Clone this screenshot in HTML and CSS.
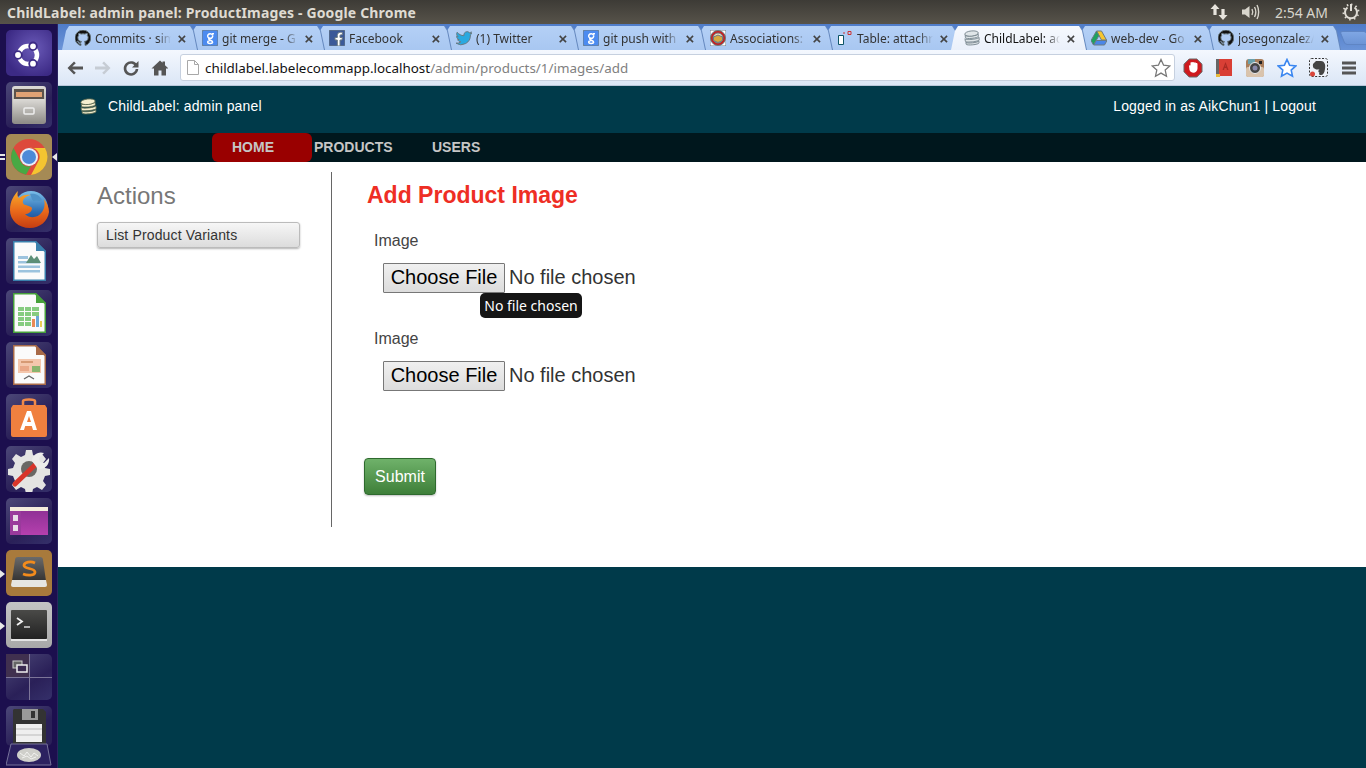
FILE: index.html
```html
<!DOCTYPE html>
<html lang="en">
<head>
<meta charset="utf-8">
<title>ChildLabel: admin panel: ProductImages</title>
<link rel="stylesheet" href="styles.css">
</head>
<body>
<svg class="defs" width="0" height="0" aria-hidden="true">
  <defs>
    <linearGradient id="foxfill" x1="0" y1="0" x2="0" y2="1"><stop offset="0" stop-color="#f8ac2a"/><stop offset=".55" stop-color="#e9681a"/><stop offset="1" stop-color="#c53d12"/></linearGradient>
    <linearGradient id="globefill" x1="0" y1="0" x2="0" y2="1"><stop offset="0" stop-color="#7cc0ea"/><stop offset=".6" stop-color="#2c6db4"/><stop offset="1" stop-color="#1c3f86"/></linearGradient>
    <linearGradient id="cabinet" x1="0" y1="0" x2="0" y2="1"><stop offset="0" stop-color="#dcdad6"/><stop offset="1" stop-color="#8f8d88"/></linearGradient>
    <linearGradient id="purplewin" x1="0" y1="0" x2="0" y2="1"><stop offset="0" stop-color="#8a2f92"/><stop offset="1" stop-color="#b540ae"/></linearGradient>
    <linearGradient id="sublimebox" x1="0" y1="0" x2="0" y2="1"><stop offset="0" stop-color="#6a6a6a"/><stop offset="1" stop-color="#333"/></linearGradient>
    <linearGradient id="termscreen" x1="0" y1="0" x2="0" y2="1"><stop offset="0" stop-color="#4a4a48"/><stop offset="1" stop-color="#222"/></linearGradient>
  </defs>
  <symbol id="gh" viewBox="0 0 16 16"><path fill="#111" d="M8 0a8 8 0 0 0-2.5 15.6c.4.1.5-.2.5-.4v-1.4c-2.2.5-2.7-1-2.7-1-.4-.9-.9-1.200-.9-1.200-.7-.5.1-.5.1-.5.8.1 1.200.8 1.200.8.7 1.200 1.900.9 2.300.7.1-.5.3-.9.5-1.100-1.800-.2-3.600-.9-3.600-4 0-.9.3-1.600.8-2.100-.1-.2-.4-1 .1-2.100 0 0 .7-.2 2.200.8a7.600 7.600 0 0 1 4 0c1.500-1 2.200-.8 2.200-.8.4 1.100.2 1.900.1 2.100.5.600.8 1.300.8 2.100 0 3.100-1.900 3.700-3.700 3.900.3.300.6.700.6 1.500v2.200c0 .2.100.5.600.4A8 8 0 0 0 8 0z"/></symbol>
  <symbol id="gg" viewBox="0 0 16 16"><rect width="16" height="16" rx="2" fill="#4c8bf0"/><path fill="none" stroke="#fff" stroke-width="1.500" d="M10.500 5.200a2.500 2.300 0 1 1-.1-.2M7.700 7.700c-1.200.8-1.300 1.500-.1 2.100 1.700.8 3.100 1.100 3 2.300-.1 1.700-4.800 1.700-4.900.1 0-1.100 1.400-1.500 2.600-1.600M10 3.700h2"/></symbol>
  <symbol id="db" viewBox="0 0 16 16"><g stroke-width=".8" transform="rotate(-6 8 8)"><path d="M1.500 11.500c0 1.800 13 1.800 13 0v2c0 1.800-13 1.800-13 0z"/><path d="M1 8c0 1.800 14 1.800 14 0v2.500c0 1.800-14 1.800-14 0z"/><path d="M1.500 4.500c0 1.800 13 1.800 13 0V7c0 1.800-13 1.800-13 0z"/><ellipse cx="8" cy="3.500" rx="6.800" ry="2.600"/></g></symbol>
  <symbol id="star" viewBox="0 0 20 20"><path d="M10 1.500l2.600 5.700 6.200.7-4.600 4.200 1.300 6.100L10 15.100l-5.500 3.100 1.300-6.100L1.200 7.900l6.200-.7z"/></symbol>
</svg>

<header class="titlebar">
  <span class="window-title">ChildLabel: admin panel: ProductImages - Google Chrome</span>
  <div class="indicators">
    <svg class="ind-net" width="18" height="18" viewBox="0 0 18 18"><path fill="#e6e3dc" d="M5 1l4.500 5H6.600v6H3.400V6H.5zM13 17l-4.500-5h2.900V6h3.200v6h2.900z"/></svg>
    <svg class="ind-vol" width="20" height="18" viewBox="0 0 20 18"><path fill="#d8d5cc" d="M1 6.500h3L8.500 3v12L4 11.500H1z"/><path fill="none" stroke="#d8d5cc" stroke-width="1.400" d="M11 6c1 2 1 4 0 6M13.500 4c1.600 3 1.600 7 0 10M16 2c2.200 4 2.200 10 0 14"/></svg>
    <span class="clock">2:54 AM</span>
    <svg class="ind-power" width="18" height="18" viewBox="0 0 18 18"><path fill="none" stroke="#e0ddd5" stroke-width="2" d="M9 1v7M5.500 4.500a6 6 0 1 0 7 0"/><path fill="none" stroke="#e0ddd5" stroke-width="2" stroke-dasharray="1.500 3.200" d="M9 1.500a7.500 7.500 0 1 1-.1 0"/></svg>
  </div>
</header>

<div class="desktop">
  <nav class="launcher">
    <div class="tile tile-purple"><svg viewBox="0 0 46 46"><circle cx="22" cy="25" r="9" fill="none" stroke="#fff" stroke-width="4.500"/><g fill="#fff" stroke="#3c2a85" stroke-width="1.800"><circle cx="12" cy="25" r="3.800"/><circle cx="27" cy="16.300" r="3.800"/><circle cx="27" cy="33.700" r="3.800"/></g></svg></div>
    <div class="tile tile-dark"><svg viewBox="0 0 46 46"><rect x="6" y="4" width="34" height="38" rx="3" fill="url(#cabinet)"/><rect x="8" y="7" width="30" height="10" fill="#5c534c"/><rect x="10" y="10" width="26" height="5" fill="#e0a274"/><rect x="7" y="17" width="32" height="24" fill="url(#cabinet)"/><rect x="18" y="26" width="10" height="6" rx="1" fill="none" stroke="#eee" stroke-width="1.500"/></svg></div>
    <div class="tile tile-gold">
      <span class="pip pip-left pip-double"></span><span class="pip-right"></span>
      <svg viewBox="0 0 46 46"><circle cx="23" cy="23" r="18" fill="#dd4a3c"/><path fill="#f4c531" d="M23 14h16a18 18 0 0 1-14 27l8-15a9 9 0 0 0-10-12z"/><path fill="#48a944" d="M7.500 14L15 28a9 9 0 0 0 10 4l-5 8.800A18 18 0 0 1 7.500 14z"/><circle cx="23" cy="23" r="9" fill="#e8eef8"/><circle cx="23" cy="23" r="7" fill="#4d8ad8"/></svg>
    </div>
    <div class="tile tile-dark"><svg viewBox="0 0 46 46"><circle cx="25" cy="22" r="17" fill="url(#globefill)"/><path fill="#4f93c9" d="M24 8c6-1 10 2 12 6-3 2-5 0-7 1-3 1-3-3-5-7z"/><path fill="url(#foxfill)" d="M4 24C4 15 8 9 12 5c-1 3-.5 6 1 7 3-3 8-4 12-3-6 1-9 5-8 8 1 3 7 2 9 5 0 4-4 6-7 6 5 5 13 4 17-2 3-4 3-9 2-13 3 4 5 8 5 13-1 9-9 16-19 16C12 42 4 34 4 24z"/></svg></div>
    <div class="tile tile-dark"><svg viewBox="0 0 46 46"><path fill="#3a80ad" d="M7 3h23l10 10v30H7z"/><path fill="#fbfbfb" d="M8.500 4.500h20.500l9.500 9.500v27.500h-30z"/><path fill="#3a80ad" d="M30 3l10 10H30z"/><rect x="12" y="18" width="10" height="3" fill="#9cc3de"/><rect x="12" y="23" width="22" height="2.500" fill="#9cc3de"/><rect x="12" y="27.500" width="22" height="2.500" fill="#9cc3de"/><rect x="12" y="32" width="22" height="2.500" fill="#9cc3de"/><path fill="#5c8f78" d="M20 25l5-8 3 4 3-3 4 7z"/></svg></div>
    <div class="tile tile-dark"><svg viewBox="0 0 46 46"><path fill="#46a03a" d="M7 3h23l10 10v30H7z"/><path fill="#fbfbfb" d="M8.500 4.500h20.500l9.500 9.500v27.500h-30z"/><path fill="#46a03a" d="M30 3l10 10H30z"/><g fill="#86cc80"><rect x="12" y="17" width="6" height="4"/><rect x="19" y="17" width="6" height="4"/><rect x="26" y="17" width="7" height="4"/><rect x="12" y="22" width="6" height="4"/><rect x="19" y="22" width="6" height="4"/><rect x="26" y="22" width="7" height="4"/><rect x="12" y="27" width="6" height="4"/><rect x="19" y="27" width="6" height="4"/><rect x="12" y="32" width="6" height="4"/><rect x="19" y="32" width="6" height="4"/></g><rect x="26" y="29" width="3" height="8" fill="#e98a55"/><rect x="30" y="26" width="3" height="11" fill="#6ba7d8"/><rect x="34" y="31" width="2" height="6" fill="#e8cf55"/></svg></div>
    <div class="tile tile-dark"><svg viewBox="0 0 46 46"><path fill="#a86a48" d="M7 3h23l10 10v30H7z"/><path fill="#fbfbfb" d="M8.500 4.500h20.500l9.500 9.500v27.500h-30z"/><path fill="#a86a48" d="M30 3l10 10H30z"/><rect x="12" y="17" width="23" height="14" fill="#f4c7ad"/><rect x="15" y="19" width="12" height="2" fill="#d69a74"/><rect x="26" y="24" width="8" height="6" fill="#8ab46e"/><rect x="14" y="24" width="9" height="5" fill="#e9a888"/><path fill="none" stroke="#666" stroke-width="1.300" d="M18 37l5-3 5 3"/></svg></div>
    <div class="tile tile-dark"><svg viewBox="0 0 46 46"><path fill="none" stroke="#f08a4a" stroke-width="2.500" d="M17 12V7c0-2 12-2 12 0v5"/><path fill="#f0803f" d="M7 11h32l2 3v27a2 2 0 0 1-2 2H7a2 2 0 0 1-2-2V14z"/><path fill="#fff" d="M21 17h4l6 19h-4l-1.200-4h-6.600L18 36h-4zm2 5l-2 6h4z"/></svg></div>
    <div class="tile tile-dark"><svg viewBox="0 0 46 46"><path fill="#e4e4e2" d="M20 4h6l1 5 4 2 5-3 4 5-3 4 2 5 5 1v6l-5 1-2 5 3 4-4 5-5-3-4 2-1 5h-6l-1-5-4-2-5 3-4-5 3-4-2-5-5-1v-6l5-1 2-5-3-4 4-5 5 3 4-2z"/><circle cx="23" cy="23" r="8" fill="#6a6864"/><path stroke="#d8352a" stroke-width="5" stroke-linecap="round" d="M9 38l21-20"/><path fill="#ececea" d="M26 15c0-6 6-10 12-8l-5 5 1 4 4 1 5-5c1 6-4 12-11 11z"/></svg></div>
    <div class="tile tile-dark"><svg viewBox="0 0 46 46"><rect x="4" y="9" width="38" height="28" fill="url(#purplewin)"/><rect x="4" y="9" width="38" height="4" fill="#f3ecdc"/><rect x="4" y="13" width="11" height="24" fill="#9a3a9c"/><rect x="7" y="17" width="5" height="6" fill="#e8dce8"/><rect x="7" y="27" width="5" height="6" fill="#e8dce8"/></svg></div>
    <div class="tile tile-amber">
      <span class="pip pip-left"></span>
      <svg viewBox="0 0 46 46"><path fill="url(#sublimebox)" d="M9 10a3 3 0 0 1 3-3h22a3 3 0 0 1 3 3l3 21H6z"/><path fill="#e6e6e2" d="M6 30h34l1 5a2 2 0 0 1-2 2H7a2 2 0 0 1-2-2z"/><path fill="none" stroke="#f28b1c" stroke-width="2.800" d="M29 13c-4-2-11-1-11 2.500s11 2.500 11 6.500-8 3.500-12 2"/></svg>
    </div>
    <div class="tile tile-light">
      <span class="pip pip-left"></span>
      <svg viewBox="0 0 46 46"><rect x="5" y="8" width="36" height="29" rx="1" fill="url(#termscreen)"/><rect x="5" y="37" width="36" height="2" fill="#e4e4e4"/><path fill="none" stroke="#f0f0f0" stroke-width="1.800" d="M11 16l5 3.500-5 3.500"/><path stroke="#ddd" stroke-width="1.500" d="M18 25h6"/></svg>
    </div>
    <div class="tile tile-dark"><svg viewBox="0 0 46 46"><rect width="23" height="23" fill="#40304f"/><path stroke="#7c7598" d="M23.500 0v46M0 23.500h46"/><rect x="7" y="7" width="9" height="7" fill="#666" stroke="#ccc"/><rect x="11" y="11" width="10" height="7" fill="#3a2a50" stroke="#eee" stroke-width="1.500"/></svg></div>
    <div class="tile tile-trash"><svg viewBox="0 0 46 62"><path fill="#333" d="M8 3h29l3 3v32H7V4z"/><rect x="16" y="3" width="16" height="11" fill="#9a9a9a"/><rect x="25" y="5" width="4" height="7" fill="#333"/><rect x="10" y="18" width="26" height="18" fill="#efefef"/><path stroke="#bbb" d="M10 23h26M10 29h26"/><path fill="#2c2160" stroke="#77739a" d="M5 38h36l4 21H0z"/><ellipse cx="23" cy="49" rx="12" ry="7" fill="#cfcfca"/><path fill="none" stroke="#f2f2f0" d="M14 47l4 3 3-4 4 5 3-4 4 3M16 52l5-2 4 3 5-2"/></svg></div>
  </nav>

  <main class="browser">
    <div class="tabstrip">
      <div class="tab"><div class="tab-shape"><svg class="favicon"><use href="#gh"/></svg><span class="tab-title">Commits · sim</span><span class="tab-close">×</span></div></div>
      <div class="tab"><div class="tab-shape"><svg class="favicon"><use href="#gg"/></svg><span class="tab-title">git merge - G</span><span class="tab-close">×</span></div></div>
      <div class="tab"><div class="tab-shape"><svg class="favicon" viewBox="0 0 16 16"><rect width="16" height="16" rx="1" fill="#3b5998"/><path fill="#fff" d="M11 16v-6h2l.4-2.500H11V6c0-.8.3-1.200 1.200-1.200h1.200V2.500C13 2.400 12.300 2.300 11.500 2.300c-2 0-3.200 1.200-3.200 3.300v1.900H6V10h2.300v6z"/></svg><span class="tab-title">Facebook</span><span class="tab-close">×</span></div></div>
      <div class="tab"><div class="tab-shape"><svg class="favicon" viewBox="0 0 16 16"><path fill="#2aa9e0" d="M16 3.200c-.6.300-1.200.4-1.900.5.700-.4 1.200-1 1.400-1.800-.6.400-1.300.6-2 .8A3.300 3.300 0 0 0 7.900 5.700C5.200 5.600 2.800 4.300 1.100 2.300c-.9 1.500-.4 3.400 1 4.400-.5 0-1-.2-1.500-.4 0 1.600 1.100 3 2.600 3.300-.5.100-1 .1-1.500 0 .4 1.300 1.600 2.200 3.100 2.300A6.600 6.600 0 0 1 0 13.200 9.300 9.300 0 0 0 14.400 5c.6-.5 1.200-1.100 1.600-1.800z"/></svg><span class="tab-title">(1) Twitter</span><span class="tab-close">×</span></div></div>
      <div class="tab"><div class="tab-shape"><svg class="favicon"><use href="#gg"/></svg><span class="tab-title">git push with</span><span class="tab-close">×</span></div></div>
      <div class="tab"><div class="tab-shape"><svg class="favicon" viewBox="0 0 16 16"><rect width="16" height="16" fill="#fff"/><circle cx="8" cy="8" r="7.500" fill="#c81f1f"/><circle cx="8" cy="8" r="5" fill="#f3e3c0"/><path fill="#d8a83c" d="M3.500 7l4.500-2 4.500 2v3.500L8 12.500l-4.500-2z"/></svg><span class="tab-title">Associations:</span><span class="tab-close">×</span></div></div>
      <div class="tab"><div class="tab-shape"><svg class="favicon" viewBox="0 0 16 16"><path fill="#fff" stroke="#0c5566" d="M1.500 5.500h5v9h-5z"/><path fill="none" stroke="#c33" d="M6 3h2M11 1.500h3v3h-3z"/></svg><span class="tab-title">Table: attachr</span><span class="tab-close">×</span></div></div>
      <div class="tab tab-active"><div class="tab-shape"><svg class="favicon"><use href="#db"/></svg><span class="tab-title">ChildLabel: ac</span><span class="tab-close">×</span></div></div>
      <div class="tab"><div class="tab-shape"><svg class="favicon" viewBox="0 0 16 16"><path fill="#f6c52f" d="M5.500 1h5l5 9h-5z"/><path fill="#1da25f" d="M5.500 1L0 10.500 2.500 15 8 5.500z"/><path fill="#4a86e8" d="M5.300 10.500H16L13.500 15H2.700z"/></svg><span class="tab-title">web-dev - Go</span><span class="tab-close">×</span></div></div>
      <div class="tab"><div class="tab-shape"><svg class="favicon"><use href="#gh"/></svg><span class="tab-title">josegonzalez/</span><span class="tab-close">×</span></div></div>
      <div class="newtab"></div>
    </div>

    <div class="toolbar">
      <svg class="tool" width="18" height="18" viewBox="0 0 18 18"><path fill="#555" d="M8 2.500L1.500 9 8 15.500l1.800-1.800L6.300 10.500H17v-3H6.300l3.500-3.200z"/></svg>
      <svg class="tool" width="18" height="18" viewBox="0 0 18 18"><path fill="#c6ccd4" d="M10 2.500L16.500 9 10 15.500l-1.800-1.800 3.500-3.200H1v-3h10.700L8.200 4.300z"/></svg>
      <svg class="tool" width="18" height="18" viewBox="0 0 18 18"><path fill="none" stroke="#555" stroke-width="2.600" d="M14.500 7A6 6 0 1 0 15 10"/><path fill="#555" d="M16.500 2v6.500H10z"/></svg>
      <svg class="tool" width="18" height="18" viewBox="-1 0 18 18"><path fill="#555" d="M9 1.500L.5 9.500H3v7h4.500v-5h3v5H15v-7h2.500L14 6.200V2.500h-2.500v1.300z"/></svg>
      <div class="omnibox">
        <svg class="page-icon" width="12" height="15" viewBox="0 0 12 15"><path fill="#fff" stroke="#a8a8a8" d="M.5.500h7l4 4v10H.500z"/><path fill="none" stroke="#a8a8a8" d="M7.500.500v4h4"/></svg>
        <span class="url"><span class="url-host">childlabel.labelecommapp.localhost</span>/admin/products/1/images/add</span>
        <svg class="omni-star"><use href="#star"/></svg>
      </div>
      <div class="extensions">
        <svg width="20" height="20" viewBox="0 0 20 20"><path fill="#ce1a1f" stroke="#666" d="M6.200 1h7.600L19 6.200v7.600L13.800 19H6.200L1 13.800V6.200z"/><path fill="#fff" d="M6 8c0-1 1-1 1.500-.5V5c0-1.200 1.500-1.200 1.500 0-.1-1.400 2-1.400 2 0 .1-1 1.800-1 1.800.2.600-.6 1.700-.3 1.700.8v4.500c0 5-6.500 5.500-8 1.500z"/></svg>
        <svg width="18" height="20" viewBox="0 0 18 20"><rect x="1" y="1" width="16" height="17" fill="#d93f35"/><rect x="1" y="1" width="3" height="17" fill="#666"/><path fill="#a92a23" d="M10.500 4l3 8h-1.500l-.6-2H9.500L9 12H7.500zM10 8.500h1l-.5-2z"/><rect x="1" y="16" width="4" height="3" fill="#e7b93a"/></svg>
        <svg width="20" height="20" viewBox="0 0 20 20"><rect x="1" y="1" width="18" height="18" rx="3" fill="#a97e5c"/><rect x="1" y="9" width="18" height="10" rx="2" fill="#d9c3ac"/><rect x="3" y="1" width="7" height="5" fill="#6aa0ab"/><rect x="14" y="3" width="3" height="3" fill="#222"/><circle cx="10" cy="10" r="5.500" fill="#444" stroke="#eee"/><circle cx="10" cy="10" r="2.500" fill="#88a"/></svg>
        <svg class="ext-star"><use href="#star"/></svg>
        <svg width="20" height="20" viewBox="0 0 20 20"><rect x=".5" y=".5" width="18" height="18" rx="2" fill="#eef2f9" stroke="#333" stroke-dasharray="2 1.500"/><path fill="#444" d="M4 6l3-3h5c3 0 5 3 4 8-.5 4-2 6-4 6-3 0-2-3-.5-2.500-2 1-3-2-1-3-3 0-4 0-5-1-1 0-2-2-1.500-4.500z"/><circle cx="3.500" cy="16" r="2.500" fill="#d9453a"/></svg>
        <svg width="16" height="14" viewBox="0 0 16 14"><path stroke="#555" stroke-width="3" d="M1 2h14M1 7h14M1 12h14"/></svg>
      </div>
    </div>

    <div class="page">
      <div class="site-head">
        <div class="brand"><svg class="brand-icon"><use href="#db"/></svg><span>ChildLabel: admin panel</span></div>
        <div class="login">Logged in as AikChun1 | Logout</div>
      </div>
      <div class="site-nav">
        <a class="nav-item nav-home">HOME</a>
        <a class="nav-item nav-products">PRODUCTS</a>
        <a class="nav-item nav-users">USERS</a>
      </div>
      <div class="content">
        <aside class="actions">
          <h2>Actions</h2>
          <a class="action-btn">List Product Variants</a>
        </aside>
        <section class="form-area">
          <h1>Add Product Image</h1>
          <div class="field">
            <label>Image</label>
            <div class="file-row"><button class="file-btn">Choose File</button><span class="file-note">No file chosen</span><span class="tooltip">No file chosen</span></div>
          </div>
          <div class="field">
            <label>Image</label>
            <div class="file-row"><button class="file-btn">Choose File</button><span class="file-note">No file chosen</span></div>
          </div>
          <button class="submit">Submit</button>
        </section>
      </div>
    </div>
  </main>
</div>
</body>
</html>
```

FILE: styles.css
```css
* { box-sizing: border-box; }
html, body { margin: 0; height: 100%; overflow: hidden; }
body { display: flex; flex-direction: column; background: #003a4a; font-family: "Liberation Sans", Arial, sans-serif; }
.defs { position: absolute; }

/* top panel */
.titlebar { height: 24px; flex: none; display: flex; align-items: center; justify-content: space-between; padding: 0 7px; background: linear-gradient(#3d3b36, #57534a); color: #dfdbd2; }
.window-title { font: bold 14px "Noto Sans", "Open Sans", sans-serif; letter-spacing: .16px; }
.indicators { display: flex; align-items: center; }
.ind-net { margin-right: 13px; }
.ind-vol { margin-right: 14px; }
.clock { font: 14px "Noto Sans", sans-serif; color: #d8d5cc; margin-right: 14px; }
.ind-power { margin-right: -1px; }

.desktop { flex: 1; display: flex; min-height: 0; }

/* launcher */
.launcher { width: 58px; flex: none; padding: 6px 0 0 6px; display: flex; flex-direction: column; gap: 6px; background: #1c0f4e; border-right: 1px solid #2a2460; }
.tile { position: relative; width: 46px; height: 46px; flex: none; border-radius: 5px; }
.tile svg { display: block; width: 46px; height: 46px; filter: blur(.4px); }
.tile-dark { background: linear-gradient(145deg, #4c4878, #2a2058 60%, #35306a); }
.tile-purple { background: radial-gradient(circle at 60% 40%, #6a5ab8, #3c2a85 75%); }
.tile-gold { background: #a58a55; }
.tile-amber { background: #a87a3c; }
.tile-light { background: linear-gradient(#c4c4c4, #a8a8a8); }
.tile-trash { background: linear-gradient(145deg, #4c4878, #2a2058 60%); height: 40px; }
.tile-trash svg { height: 62px; }
.pip { position: absolute; left: -6px; top: 20px; width: 0; height: 0; border-left: 5px solid #e8e8e8; border-top: 4px solid transparent; border-bottom: 4px solid transparent; }
.pip-double { width: 5px; height: 2px; border: 0; background: #e8e8e8; box-shadow: 0 4px 0 #e8e8e8; }
.pip-right { position: absolute; left: 46px; top: 19px; width: 0; height: 0; border-right: 5px solid #e8e8e8; border-top: 4px solid transparent; border-bottom: 4px solid transparent; }

/* browser */
.browser { flex: 1; min-width: 0; display: flex; flex-direction: column; }
.tabstrip { height: 26px; flex: none; display: flex; padding: 2px 0 0 4px; background: linear-gradient(#4f7cc9, #6b94d8); }
.tab { position: relative; width: 135px; height: 24px; margin-right: -8px; flex: none; filter: drop-shadow(1px 0 0 #6487bd); }
.tab:nth-child(1) { z-index: 10; }
.tab:nth-child(2) { z-index: 9; }
.tab:nth-child(3) { z-index: 8; }
.tab:nth-child(4) { z-index: 7; }
.tab:nth-child(5) { z-index: 6; }
.tab:nth-child(6) { z-index: 5; }
.tab:nth-child(7) { z-index: 4; }
.tab:nth-child(9) { z-index: 3; }
.tab:nth-child(10) { z-index: 2; }
.tab.tab-active { z-index: 20; }
.tab-shape { height: 100%; display: flex; align-items: center; padding: 0 8px 0 13px; background: linear-gradient(#b4d0f6, #a8c7f1); clip-path: polygon(0 100%, 4px 20%, 7px 0, calc(100% - 7px) 0, calc(100% - 4px) 20%, 100% 100%); }
.tab-active .tab-shape { background: linear-gradient(#f6f9fe, #eaf0fa); }
.favicon { width: 16px; height: 16px; flex: none; fill: #dfe5e8; stroke: #6a7a82; }
.tab-title { flex: 1; min-width: 0; margin-left: 4px; overflow: hidden; white-space: nowrap; font: 12px "Noto Sans", sans-serif; color: #333; -webkit-mask-image: linear-gradient(90deg, #000 78%, transparent 95%); mask-image: linear-gradient(90deg, #000 78%, transparent 95%); }
.tab-active .tab-title { color: #111; }
.tab-close { width: 14px; flex: none; text-align: center; font: bold 15px "Liberation Sans", sans-serif; color: #444; }
.newtab { width: 27px; height: 14px; margin: 5px 0 0 10px; flex: none; background: linear-gradient(#7fa6e4, #6c94d6); border: 1px solid #5f85c4; border-radius: 3px; transform: skewX(22deg); position: relative; z-index: 1; }

.toolbar { height: 36px; flex: none; display: flex; align-items: center; padding: 0 8px; background: linear-gradient(#f4f8fe, #dbe6f6); border-bottom: 1px solid #b9c7da; }
.tool { flex: none; margin-right: 10px; }
.omnibox { flex: none; width: 995px; height: 27px; margin: 0 0 0 2px; display: flex; align-items: center; padding: 0 3px 0 6px; background: #fff; border: 1px solid #c6d0df; border-radius: 3px; }
.page-icon { flex: none; margin-right: 6px; }
.url { flex: 1; font: 13.4px "Noto Sans", sans-serif; color: #808080; white-space: nowrap; }
.url-host { color: #111; }
.omni-star { width: 20px; height: 20px; fill: #fff; stroke: #777; stroke-width: 1.300; }
.extensions { flex: 1; display: flex; align-items: center; justify-content: space-between; padding: 0 1px 0 8px; }
.ext-star { width: 20px; height: 20px; fill: #fff; stroke: #3a86f0; stroke-width: 1.600; }

/* page */
.page { flex: 1; display: flex; flex-direction: column; min-height: 0; background: #003a4a; }
.site-head { height: 47px; flex: none; display: flex; align-items: center; justify-content: space-between; padding: 0 50px 7px 22px; color: #fff; font-size: 14px; letter-spacing: .15px; }
.brand { display: flex; align-items: center; gap: 11px; }
.brand-icon { width: 17px; height: 17px; fill: #f5f0d0; stroke: #5c6a50; }
.site-nav { height: 29px; flex: none; display: flex; align-items: stretch; padding-left: 154px; background: #00171d; font-size: 14px; font-weight: bold; color: #c6c6c6; }
.nav-item { display: flex; align-items: center; padding-bottom: 2px; }
.nav-home { width: 100px; padding-left: 20px; background: #990000; border-radius: 6px; }
.nav-products { padding-left: 2px; width: 120px; }
.content { height: 405px; flex: none; display: flex; padding-top: 10px; background: #fff; }
.actions { width: 274px; height: 355px; flex: none; padding: 10px 31px 0 39px; border-right: 1px solid #666; }
.actions h2 { margin: 0 0 12px; font-size: 24px; font-weight: normal; line-height: 28px; color: #777; }
.action-btn { display: block; height: 26px; padding-left: 8px; font-size: 14px; letter-spacing: .15px; line-height: 25px; color: #333; border: 1px solid #bbb; border-radius: 3px; background: linear-gradient(#f6f6f6, #dcdcdc); box-shadow: 0 1px 2px rgba(0,0,0,.3); }
.form-area { flex: 1; padding: 9px 0 0 35px; }
.form-area h1 { margin: 0 0 23px; font-size: 23px; line-height: 28px; font-weight: bold; color: #ee2e24; }
.field { padding-left: 7px; margin-bottom: 37px; }
.field label { display: block; font-size: 16px; line-height: 18px; color: #444; margin-bottom: 13px; }
.file-row { position: relative; display: flex; align-items: center; gap: 4px; padding-left: 9px; font-size: 20px; color: #333; height: 30px; }
.file-note { margin-bottom: 2px; }
.file-btn { width: 122px; height: 30px; padding: 0 0 2px; font: 20px "Liberation Sans", sans-serif; color: #000; border: 1px solid #777; border-radius: 1px; background: linear-gradient(#f0f0f0, #dcdcdc); }
.tooltip { position: absolute; left: 106px; top: 30px; height: 25px; width: 102px; text-align: center; font: 14px/25px "Noto Sans", sans-serif; color: #fff; background: #151515; border-radius: 5px; }
.submit { display: block; width: 72px; height: 37px; margin: 67px 0 0 -3px; padding: 0; font: 16px "Liberation Sans", sans-serif; color: #fff; border: 1px solid #2e6a2e; border-radius: 4px; background: linear-gradient(#6fb26a, #3e7f39); box-shadow: 0 1px 2px rgba(0,0,0,.25); }
```
